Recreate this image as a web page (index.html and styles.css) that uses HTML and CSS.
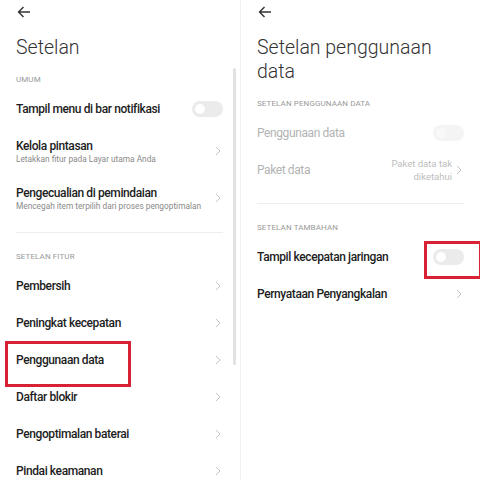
FILE: index.html
```html
<!DOCTYPE html>
<html lang="id">

<head>
    <meta charset="UTF-8">
    <title>Setelan</title>
    <link rel="stylesheet" href="styles.css">
</head>

<body>
    <div class="screens">
        <!-- layar kiri -->
        <section class="screen">
            <div class="topbar">
                <svg class="back" width="14" height="12" viewBox="0 0 14 12"><path d="M13 6H1.5M6.5 1L1.5 6l5 5" fill="none" stroke="#333" stroke-width="1.4"/></svg>
            </div>
            <h1 class="title">Setelan</h1>

            <div class="label">UMUM</div>
            <div class="row">
                <span class="row-text">Tampil menu di bar notifikasi</span>
                <span class="toggle"></span>
            </div>
            <div class="row two-line">
                <div>
                    <div class="row-text">Kelola pintasan</div>
                    <div class="row-sub">Letakkan fitur pada Layar utama Anda</div>
                </div>
                <svg class="chev" width="6" height="10" viewBox="0 0 6 10"><path d="M1 1l4 4-4 4" fill="none" stroke="#c4c4c4" stroke-width="1"/></svg>
            </div>
            <div class="row two-line">
                <div>
                    <div class="row-text">Pengecualian di pemindaian</div>
                    <div class="row-sub">Mencegah item terpilih dari proses pengoptimalan</div>
                </div>
                <svg class="chev" width="6" height="10" viewBox="0 0 6 10"><path d="M1 1l4 4-4 4" fill="none" stroke="#c4c4c4" stroke-width="1"/></svg>
            </div>

            <hr class="divider">

            <div class="label">SETELAN FITUR</div>
            <div class="row">
                <span class="row-text">Pembersih</span>
                <svg class="chev" width="6" height="10" viewBox="0 0 6 10"><path d="M1 1l4 4-4 4" fill="none" stroke="#c4c4c4" stroke-width="1"/></svg>
            </div>
            <div class="row">
                <span class="row-text">Peningkat kecepatan</span>
                <svg class="chev" width="6" height="10" viewBox="0 0 6 10"><path d="M1 1l4 4-4 4" fill="none" stroke="#c4c4c4" stroke-width="1"/></svg>
            </div>
            <div class="row boxed">
                <span class="row-text">Penggunaan data</span>
                <svg class="chev" width="6" height="10" viewBox="0 0 6 10"><path d="M1 1l4 4-4 4" fill="none" stroke="#c4c4c4" stroke-width="1"/></svg>
            </div>
            <div class="row">
                <span class="row-text">Daftar blokir</span>
                <svg class="chev" width="6" height="10" viewBox="0 0 6 10"><path d="M1 1l4 4-4 4" fill="none" stroke="#c4c4c4" stroke-width="1"/></svg>
            </div>
            <div class="row">
                <span class="row-text">Pengoptimalan baterai</span>
                <svg class="chev" width="6" height="10" viewBox="0 0 6 10"><path d="M1 1l4 4-4 4" fill="none" stroke="#c4c4c4" stroke-width="1"/></svg>
            </div>
            <div class="row">
                <span class="row-text">Pindai keamanan</span>
                <svg class="chev" width="6" height="10" viewBox="0 0 6 10"><path d="M1 1l4 4-4 4" fill="none" stroke="#c4c4c4" stroke-width="1"/></svg>
            </div>

            <div class="scrollbar"></div>
        </section>

        <!-- layar kanan -->
        <section class="screen">
            <div class="topbar">
                <svg class="back" width="14" height="12" viewBox="0 0 14 12"><path d="M13 6H1.5M6.5 1L1.5 6l5 5" fill="none" stroke="#333" stroke-width="1.4"/></svg>
            </div>
            <h1 class="title">Setelan penggunaan data</h1>

            <div class="label">SETELAN PENGGUNAAN DATA</div>
            <div class="row disabled">
                <span class="row-text">Penggunaan data</span>
                <span class="toggle"></span>
            </div>
            <div class="row disabled">
                <span class="row-text">Paket data</span>
                <span class="row-end">
                    <span class="row-value">Paket data tak<br>diketahui</span>
                    <svg class="chev" width="6" height="10" viewBox="0 0 6 10"><path d="M1 1l4 4-4 4" fill="none" stroke="#c4c4c4" stroke-width="1"/></svg>
                </span>
            </div>

            <hr class="divider short">

            <div class="label">SETELAN TAMBAHAN</div>
            <div class="row">
                <span class="row-text">Tampil kecepatan jaringan</span>
                <span class="toggle marked"></span>
            </div>
            <div class="row">
                <span class="row-text">Pernyataan Penyangkalan</span>
                <svg class="chev" width="6" height="10" viewBox="0 0 6 10"><path d="M1 1l4 4-4 4" fill="none" stroke="#c4c4c4" stroke-width="1"/></svg>
            </div>
        </section>
    </div>
</body>

</html>
```

FILE: styles.css
```css
* {
    margin: 0;
    padding: 0;
    box-sizing: border-box;
    font-family: Roboto, 'Noto Sans', sans-serif;
}

body {
    background-color: #fff;
    width: 480px;
    height: 480px;
    overflow: hidden;
}

.screens {
    display: flex;
    height: 480px;
}

.screen {
    position: relative;
    width: 240px;
    padding: 0 17px 0 16px;
    overflow: hidden;
}

.screen + .screen {
    width: 240px;
    border-left: 1px solid #f0f0f0;
    padding-left: 16px;
    padding-right: 16px;
}

.topbar {
    height: 24px;
    display: flex;
    align-items: center;
    padding-left: 1px;
}

.title {
    margin-top: 12px;
    font-size: 19.5px;
    line-height: 24px;
    font-weight: 300;
    color: #333;
}

.label {
    margin-top: 14px;
    margin-bottom: 4px;
    font-size: 8px;
    line-height: 12px;
    color: #9a9a9a;
    letter-spacing: 0.1px;
}

.row {
    position: relative;
    height: 37px;
    display: flex;
    justify-content: space-between;
    align-items: center;
}

.row.two-line {
    height: 47px;
}

.row-text {
    font-size: 12px;
    line-height: 16px;
    font-weight: 500;
    letter-spacing: -0.4px;
    color: #1d1d1d;
}

.row-sub {
    font-size: 8.3px;
    line-height: 10px;
    color: #8a8a8a;
}

.row.disabled .row-text {
    font-weight: 400;
    color: #b3b3b3;
}

.row-end {
    display: flex;
    align-items: center;
    gap: 4px;
}

.row-value {
    font-size: 9.5px;
    line-height: 13px;
    color: #bdbdbd;
    text-align: right;
}

.chev {
    margin-right: 2px;
    flex-shrink: 0;
}

.toggle {
    position: relative;
    width: 31px;
    height: 16px;
    border-radius: 8px;
    background-color: #ebebeb;
    flex-shrink: 0;
}

.toggle::before {
    content: "";
    position: absolute;
    left: 3px;
    top: 3px;
    width: 10px;
    height: 10px;
    border-radius: 50%;
    background-color: #fff;
}

.row.disabled .toggle {
    background-color: #f4f4f4;
}

.row.disabled .toggle::before {
    background-color: #f8f8f8;
}

.divider {
    border: none;
    border-top: 1px solid #eeeeee;
    margin-top: 11px;
}

.divider.short {
    margin-top: 15px;
}

.divider + .label {
    margin-top: 18px;
}

/* kotak merah penanda */
.row.boxed::after {
    content: "";
    position: absolute;
    left: -11px;
    top: 0;
    width: 120px;
    height: 40px;
    border: 3px solid #d62233;
}

.toggle.marked::after {
    content: "";
    position: absolute;
    left: -9px;
    top: -8px;
    width: 52px;
    height: 32px;
    border: 3px solid #d62233;
}

.scrollbar {
    position: absolute;
    left: 233px;
    top: 68px;
    width: 3px;
    height: 297px;
    border-radius: 2px;
    background-color: #e2e2e2;
}
```
